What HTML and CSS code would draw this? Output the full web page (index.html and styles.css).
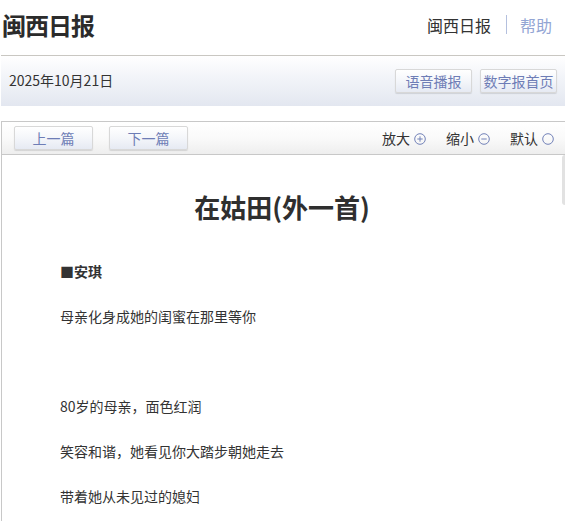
FILE: index.html
```html
<!DOCTYPE html>
<html lang="zh-CN">
<head>
    <meta charset="UTF-8">
    <meta name="viewport" content="width=device-width, initial-scale=1.0">
    <title>在姑田(外一首) - 闽西日报</title>
    <link rel="stylesheet" href="styles.css">
</head>
<body>
    <div class="page">
        <div class="header">
            <h1 class="logo">闽西日报</h1>
            <div class="nav">
                <a class="nav-home">闽西日报</a>
                <span class="nav-sep"></span>
                <a class="nav-help">帮助</a>
            </div>
        </div>

        <div class="datebar">
            <span class="date">2025年10月21日</span>
            <div class="datebar-btns">
                <button class="btn">语音播报</button>
                <button class="btn">数字报首页</button>
            </div>
        </div>

        <div class="article">
            <div class="toolbar">
                <div class="pager">
                    <button class="btn btn-page">上一篇</button>
                    <button class="btn btn-page">下一篇</button>
                </div>
                <div class="zoom">
                    <span class="zoom-item">放大
                        <svg class="zoom-icon" viewBox="0 0 12 12"><circle cx="6" cy="6" r="5.3"/><path d="M3.3 6h5.4M6 3.3v5.4"/></svg>
                    </span>
                    <span class="zoom-item">缩小
                        <svg class="zoom-icon" viewBox="0 0 12 12"><circle cx="6" cy="6" r="5.3"/><path d="M3.3 6h5.4"/></svg>
                    </span>
                    <span class="zoom-item">默认
                        <svg class="zoom-icon" viewBox="0 0 12 12"><circle cx="6" cy="6" r="5.3"/></svg>
                    </span>
                </div>
            </div>

            <div class="article-body">
                <div class="content">
                    <h2 class="title">在姑田(外一首)</h2>
                    <p class="author">■安琪</p>
                    <p>母亲化身成她的闺蜜在那里等你</p>
                    <p>&nbsp;</p>
                    <p>80岁的母亲，面色红润</p>
                    <p>笑容和谐，她看见你大踏步朝她走去</p>
                    <p>带着她从未见过的媳妇</p>
                    <p>&nbsp;</p>
                </div>
                <div class="scroll-track">
                    <div class="scroll-thumb"></div>
                </div>
            </div>
        </div>
    </div>
</body>
</html>
```

FILE: styles.css
```css
html, body {
    margin: 0;
    padding: 0;
    overflow: hidden;
    background: #ffffff;
}
body {
    font-family: "Noto Sans CJK SC", "Liberation Sans", sans-serif;
    color: #333333;
    font-size: 14px;
}
.page {
    width: 564px;
    padding-left: 1px;
}
.header {
    display: flex;
    align-items: center;
    justify-content: space-between;
    height: 55px;
    border-bottom: 1px solid #c9c7c2;
}
.logo {
    margin: 0 0 6px 1px;
    font-size: 24px;
    line-height: 34px;
    font-weight: bold;
    color: #2b2b2b;
    letter-spacing: -1px;
}
.nav {
    display: flex;
    align-items: center;
    margin: 0 13px 6px 0;
    font-size: 16px;
    line-height: 22px;
}
.nav-home {
    color: #333333;
}
.nav-sep {
    width: 1px;
    height: 19px;
    margin: 0 13px 0 15px;
    background: #b4c0de;
}
.nav-help {
    color: #93a5d4;
}
.datebar {
    display: flex;
    align-items: center;
    justify-content: space-between;
    height: 50px;
    padding: 0 8px 0 8px;
    background: linear-gradient(to bottom, #ffffff 0%, #f3f5f9 40%, #e3e7f0 100%);
}
.date {
    font-size: 14px;
    line-height: 20px;
    color: #333333;
    margin-top: -2px;
}
.datebar-btns {
    display: flex;
    gap: 8px;
}
.btn {
    font-family: "Noto Sans CJK SC", "Liberation Sans", sans-serif;
    font-size: 14px;
    line-height: 20px;
    height: 24px;
    width: 77px;
    padding: 0;
    color: #6e7db6;
    background: linear-gradient(to bottom, #ffffff 0%, #f4f6fa 50%, #e6eaf3 100%);
    border: 1px solid #d8d8d8;
    border-radius: 2px;
    box-shadow: 0 1px 1px rgba(0, 0, 0, 0.12);
    cursor: pointer;
}
.article {
    width: 577px;
    margin-top: 15px;
    border: 1px solid #c8c8c8;
}
.toolbar {
    display: flex;
    align-items: center;
    justify-content: space-between;
    height: 32px;
    padding: 0 25px 0 12px;
    border-bottom: 1px solid #c8c8c8;
    background: linear-gradient(to bottom, #ffffff 0%, #fafafa 50%, #eeeeee 100%);
}
.pager {
    display: flex;
    gap: 16px;
}
.btn-page {
    width: 79px;
}
.zoom {
    display: flex;
    gap: 20px;
}
.zoom-item {
    display: flex;
    align-items: center;
    gap: 4px;
    font-size: 14px;
    line-height: 20px;
    color: #333333;
}
.zoom-icon {
    width: 12px;
    height: 12px;
    margin-top: 2px;
    fill: none;
    stroke: #7382b8;
    stroke-width: 1;
}
.article-body {
    display: flex;
}
.content {
    flex: 1;
    padding: 0 58px;
    height: 380px;
    overflow: hidden;
}
.title {
    margin: 34px 0 34px;
    font-size: 26px;
    line-height: 36px;
    font-weight: bold;
    text-align: center;
    color: #2f2f2f;
}
.content p {
    margin: 0 0 20px;
    font-size: 14px;
    line-height: 25px;
    color: #333333;
}
.content .author {
    font-weight: bold;
}
.scroll-track {
    width: 17px;
}
.scroll-thumb {
    width: 8px;
    height: 50px;
    margin-top: 0;
    background: #e2e2e2;
    border-radius: 3px;
}
```
